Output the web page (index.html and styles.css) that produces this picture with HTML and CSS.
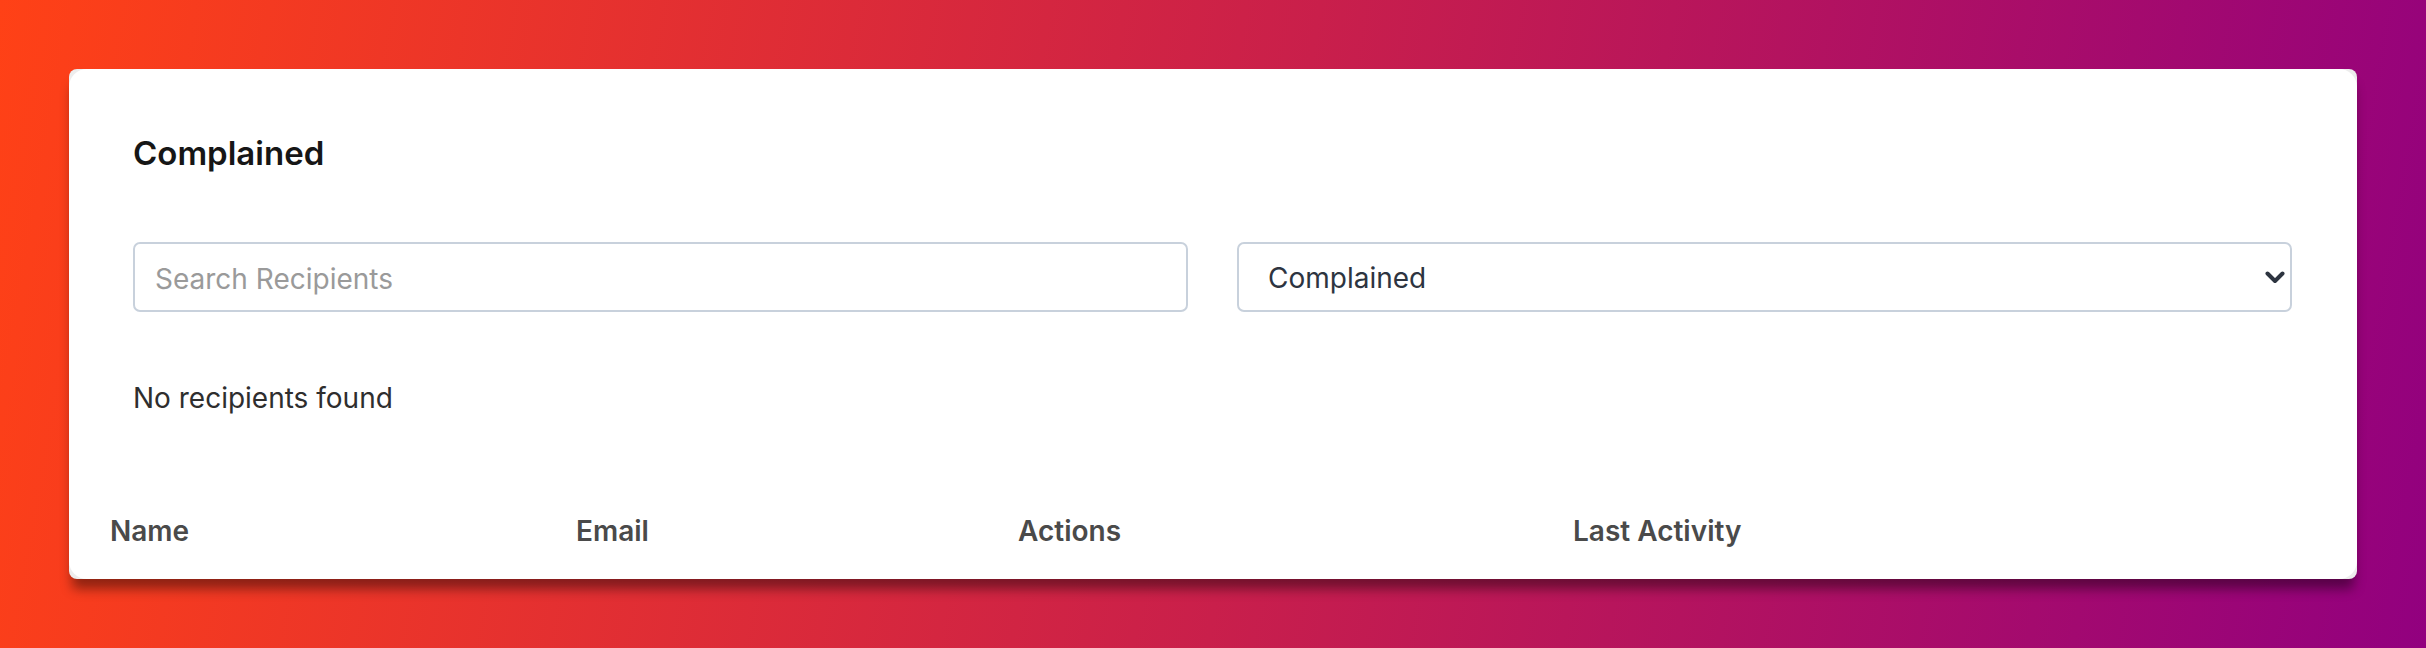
FILE: index.html
```html
<!DOCTYPE html>
<html lang="en">
<head>
    <meta charset="UTF-8">
    <meta name="viewport" content="width=device-width, initial-scale=1.0">
    <title>Recipients</title>
    <link rel="stylesheet" href="styles.css">
</head>
<body>

    <div class="card-frame">
        <div class="card">
            <h2 class="card-title">Complained</h2>

            <div class="filters">
                <input type="text" class="search-input" placeholder="Search Recipients">
                <div class="select-wrap">
                    <select class="status-select">
                        <option>Complained</option>
                        <option>Delivered</option>
                        <option>Bounced</option>
                        <option>Unsubscribed</option>
                    </select>
                    <svg class="select-arrow" width="20" height="13" viewBox="0 0 20 13">
                        <path d="M2.5 2.5 L10 10 L17.5 2.5" fill="none" stroke="#2d3440" stroke-width="4" stroke-linecap="round" stroke-linejoin="round"/>
                    </svg>
                </div>
            </div>

            <p class="empty-note">No recipients found</p>

            <table class="recipients-table">
                <colgroup>
                    <col class="col-name">
                    <col class="col-email">
                    <col class="col-actions">
                    <col>
                </colgroup>
                <thead>
                    <tr>
                        <th>Name</th>
                        <th>Email</th>
                        <th>Actions</th>
                        <th>Last Activity</th>
                    </tr>
                </thead>
                <tbody id="recipient-list"></tbody>
            </table>
        </div>
    </div>

</body>
</html>
```

FILE: styles.css
```css
/* General Styles */
html, body {
    margin: 0;
    padding: 0;
}

body {
    font-family: Inter, "Noto Sans", sans-serif;
    background: linear-gradient(100deg, #ff4116 0%, #c91f4b 52%, #92007f 100%);
    min-height: 100vh;
    padding: 69px;
    box-sizing: border-box;
}

/* Card */
.card-frame {
    background: #ededed;
    border-radius: 8px;
    box-shadow: 0 13px 12px -3px rgba(0, 0, 0, 0.42);
}

.card {
    background: #ffffff;
    border-radius: 18px;
    padding: 64px 65px 28px 64px;
}

.card-title {
    margin: 0;
    font-size: 33px;
    line-height: 40px;
    font-weight: 600;
    color: #161616;
}

/* Filters */
.filters {
    display: grid;
    grid-template-columns: 1fr 1fr;
    gap: 49px;
    margin-top: 69px;
}

.search-input, .status-select {
    width: 100%;
    min-width: 0;
    height: 70px;
    box-sizing: border-box;
    border: 2px solid #c8d1dc;
    border-radius: 7px;
    background: #ffffff;
    font-family: Inter, "Noto Sans", sans-serif;
    font-size: 28px;
    outline: none;
}

.search-input {
    padding: 4px 20px 0;
    color: #2d3440;
}

.search-input::placeholder {
    color: #9a9a9a;
}

.select-wrap {
    position: relative;
    min-width: 0;
}

.status-select {
    appearance: none;
    -webkit-appearance: none;
    padding: 2px 50px 0 29px;
    color: #2d3440;
}

.select-arrow {
    position: absolute;
    right: 7px;
    top: 29px;
    pointer-events: none;
}

/* Empty state */
.empty-note {
    margin: 66px 0 0;
    font-size: 28px;
    line-height: 40px;
    color: #2e2e2e;
}

/* Table */
.recipients-table {
    width: calc(100% + 23px);
    margin: 93px 0 0 -23px;
    border-collapse: collapse;
    table-layout: fixed;
}

.col-name {
    width: 466px;
}

.col-email {
    width: 442px;
}

.col-actions {
    width: 555px;
}

.recipients-table th {
    padding: 0;
    text-align: left;
    font-size: 28px;
    line-height: 40px;
    font-weight: 600;
    color: #4a4a4a;
}
```
